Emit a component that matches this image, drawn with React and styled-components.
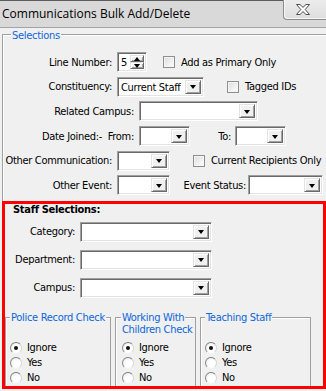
import React from "react";
import styled, { createGlobalStyle } from "styled-components";

const GlobalStyle = createGlobalStyle`
  html, body {
    margin: 0;
    padding: 0;
    background: #f0f0f0;
  }
  body {
    font-family: "DejaVu Sans Condensed", "DejaVu Sans", sans-serif;
    font-size: 11px;
    letter-spacing: -0.3px;
    color: #000;
  }
`;

const Window = styled.div`
  width: 326px;
  height: 391px;
  overflow: hidden;
  background: #f0f0f0;
  display: flex;
  flex-direction: column;
`;

const TitleBar = styled.div`
  height: 28px;
  flex: none;
  box-sizing: border-box;
  background: #d9d9d9;
  border-top: 1px solid #5c5c5c;
  border-bottom: 1px solid #a3a3a3;
  display: flex;
  align-items: flex-start;
`;

const Title = styled.span`
  font-family: "Open Sans", sans-serif;
  font-size: 12px;
  letter-spacing: 0;
  line-height: 16px;
  padding: 5px 0 0 2px;
`;

const CloseButton = styled.span`
  margin-left: auto;
  margin-top: -1px;
  width: 43px;
  height: 20px;
  box-sizing: border-box;
  border-left: 1px solid #8c8c8c;
  border-bottom: 1px solid #8c8c8c;
  border-bottom-left-radius: 4px;
  background: linear-gradient(#ececec, #dedede);
  box-shadow: inset 1px -1px 0 #f6f6f6;
  display: flex;
  align-items: center;
  justify-content: center;
  padding-right: 4px;
`;

const Body = styled.div`
  flex: 1;
  padding-left: 2px;
  display: flex;
  flex-direction: column;
`;

const Frame = styled.div`
  box-sizing: border-box;
  border: 1px solid #a0a0a0;
  border-bottom: none;
  box-shadow: inset 1px 1px 0 #fff;
  margin-top: ${(p) => p.$top || 0}px;
  width: ${(p) => (p.$w ? `${p.$w}px` : "auto")};
  display: flex;
  flex-direction: column;
  flex: none;
`;

const CaptionRow = styled.div`
  margin-top: ${(p) => p.$lift || -6}px;
  padding-left: ${(p) => p.$indent}px;
  width: ${(p) => (p.$wrap ? `${p.$wrap}px` : "auto")};
  height: ${(p) => p.$h || 13}px;
  line-height: 12px;
  flex: none;
`;

const Caption = styled.span`
  color: #0c66d8;
  background: #f0f0f0;
  padding: 0 1px;
  box-decoration-break: clone;
`;

const Rows = styled.div`
  display: flex;
  flex-direction: column;
  gap: ${(p) => p.$gap}px;
  margin-top: ${(p) => p.$top}px;
  padding-bottom: ${(p) => p.$bottom || 0}px;
`;

const Row = styled.div`
  display: flex;
  align-items: center;
  height: 20px;
  white-space: nowrap;
`;

const Label = styled.span`
  width: ${(p) => p.$w}px;
  margin-right: ${(p) => (p.$gap === undefined ? 5 : p.$gap)}px;
  text-align: right;
  flex: none;
  display: flex;
  justify-content: flex-end;
  overflow: visible;
`;

const sunken = `
  border: 1px solid;
  border-color: #a0a0a0 #ffffff #ffffff #a0a0a0;
  box-shadow: inset 1px 1px 0 #696969, inset -1px -1px 0 #e3e3e3;
`;

const raised = `
  border: 1px solid;
  border-color: #e3e3e3 #696969 #696969 #e3e3e3;
  box-shadow: inset 1px 1px 0 #ffffff, inset -1px -1px 0 #a0a0a0;
`;

const SelectBox = styled.div`
  width: ${(p) => p.$w}px;
  height: 20px;
  box-sizing: border-box;
  background: #fff;
  ${sunken}
  padding: 2px;
  display: flex;
  align-items: stretch;
  flex: none;
`;

const SelectValue = styled.span`
  flex: 1;
  line-height: 16px;
  padding-left: 1px;
  overflow: hidden;
`;

const DropButton = styled.span`
  width: 16px;
  box-sizing: border-box;
  background: #f0f0f0;
  ${raised}
  display: flex;
  align-items: center;
  justify-content: center;
  &::after {
    content: "";
    border-left: 3.5px solid transparent;
    border-right: 3.5px solid transparent;
    border-top: 4px solid #000;
    margin-top: 1px;
  }
`;

const Spinner = styled(SelectBox)`
  width: 30px;
`;

const SpinButtons = styled.span`
  width: 14px;
  display: flex;
  flex-direction: column;
`;

const SpinArrow = styled.span`
  flex: 1;
  box-sizing: border-box;
  background: #f0f0f0;
  ${raised}
  display: flex;
  align-items: center;
  justify-content: center;
  &::after {
    content: "";
    border-left: 3.5px solid transparent;
    border-right: 3.5px solid transparent;
    ${(p) =>
      p.$up ? "border-bottom: 4px solid #000;" : "border-top: 4px solid #000;"}
  }
`;

const CheckWrap = styled.span`
  display: flex;
  align-items: center;
  margin-left: ${(p) => p.$left}px;
  gap: 6px;
`;

const CheckBox = styled.span`
  width: 12px;
  height: 12px;
  box-sizing: border-box;
  border: 1px solid #8e8f8f;
  background: linear-gradient(135deg, #dcdcdc, #ffffff);
  box-shadow: inset 0 0 0 1px #f4f4f4;
  flex: none;
`;

const StaffBox = styled.div`
  width: 324px;
  height: 188px;
  box-sizing: border-box;
  border: 3px solid #ff0000;
  display: flex;
  flex-direction: column;
  overflow: hidden;
  flex: none;
`;

const StaffTitle = styled.div`
  font-weight: bold;
  line-height: 12px;
  padding-left: 8px;
`;

const Groups = styled.div`
  display: flex;
  align-items: stretch;
  flex: 1;
  margin-top: 19px;
  gap: ${(p) => p.$gap}px;
`;

const RadioList = styled.div`
  display: flex;
  flex-direction: column;
  gap: 3px;
  margin-top: 6px;
  padding-left: ${(p) => p.$indent}px;
`;

const RadioRow = styled.div`
  display: flex;
  align-items: center;
  height: 12px;
  gap: 5px;
`;

const RadioDot = styled.span`
  width: 12px;
  height: 12px;
  box-sizing: border-box;
  border-radius: 50%;
  border: 1px solid;
  border-color: #7a7a7a #d6d6d6 #f4f4f4 #8a8a8a;
  background: radial-gradient(circle at 60% 60%, #ffffff 40%, #e6e6e6 100%);
  display: flex;
  align-items: center;
  justify-content: center;
  flex: none;
  &::after {
    content: "";
    width: 4px;
    height: 4px;
    border-radius: 50%;
    background: ${(p) => (p.$on ? "#111" : "transparent")};
  }
`;

const Select = ({ w, value }) => (
  <SelectBox $w={w}>
    <SelectValue>{value}</SelectValue>
    <DropButton />
  </SelectBox>
);

const Check = ({ left, children }) => (
  <CheckWrap $left={left}>
    <CheckBox />
    <span>{children}</span>
  </CheckWrap>
);

const RadioGroup = ({ w, title, indent, wrap, radioIndent }) => (
  <Frame $w={w}>
    <CaptionRow $indent={indent} $wrap={wrap} $h={24}>
      <Caption>{title}</Caption>
    </CaptionRow>
    <RadioList $indent={radioIndent}>
      {["Ignore", "Yes", "No"].map((opt, i) => (
        <RadioRow key={opt}>
          <RadioDot $on={i === 0} />
          <span>{opt}</span>
        </RadioRow>
      ))}
    </RadioList>
  </Frame>
);

const CloseIcon = () => (
  <svg width="14" height="11" viewBox="0 0 14 11">
    <polygon
      points="0.5,0.5 4,0.5 7,3.4 10,0.5 13.5,0.5 9.2,5.5 13.5,10.5 10,10.5 7,7.6 4,10.5 0.5,10.5 4.8,5.5"
      fill="#ffffff"
      stroke="#4f4f4f"
      strokeWidth="1"
      strokeLinejoin="round"
    />
  </svg>
);

export default function App() {
  return (
    <>
      <GlobalStyle />
      <Window>
        <TitleBar>
          <Title>Communications Bulk Add/Delete</Title>
          <CloseButton>
            <CloseIcon />
          </CloseButton>
        </TitleBar>
        <Body>
          <Frame $top={6} $w={340}>
            <CaptionRow $indent={8} $lift={-5}>
              <Caption>Selections</Caption>
            </CaptionRow>
            <Rows $gap={4.7} $top={9} $bottom={5.5}>
              <Row>
                <Label $w={109}>Line Number:</Label>
                <Spinner>
                  <SelectValue>5</SelectValue>
                  <SpinButtons>
                    <SpinArrow $up />
                    <SpinArrow />
                  </SpinButtons>
                </Spinner>
                <Check left={16}>Add as Primary Only</Check>
              </Row>
              <Row>
                <Label $w={109}>Constituency:</Label>
                <Select w={87} value="Current Staff" />
                <Check left={23}>Tagged IDs</Check>
              </Row>
              <Row>
                <Label $w={131}>Related Campus:</Label>
                <Select w={119} />
              </Row>
              <Row>
                <Label $w={131}>Date Joined:-&nbsp;&nbsp;From:</Label>
                <Select w={51} />
                <Label $w={41} $gap={4}>To:</Label>
                <Select w={51} />
              </Row>
              <Row>
                <Label $w={109}>Other Communication:</Label>
                <Select w={53} />
                <Check left={23}>Current Recipients Only</Check>
              </Row>
              <Row>
                <Label $w={109}>Other Event:</Label>
                <Select w={53} />
                <Label $w={76} $gap={2}>Event Status:</Label>
                <Select w={75} />
              </Row>
            </Rows>
          </Frame>
          <StaffBox>
            <StaffTitle>Staff Selections:</StaffTitle>
            <Rows $gap={8} $top={6}>
              <Row>
                <Label $w={70}>Category:</Label>
                <Select w={132} />
              </Row>
              <Row>
                <Label $w={70}>Department:</Label>
                <Select w={132} />
              </Row>
              <Row>
                <Label $w={70}>Campus:</Label>
                <Select w={132} />
              </Row>
            </Rows>
            <Groups $gap={4}>
              <RadioGroup w={106} title="Police Record Check" indent={4} radioIndent={4} />
              <RadioGroup w={81} title="Working With Children Check" indent={5} wrap={78} radioIndent={6} />
              <RadioGroup w={111} title="Teaching Staff" indent={4} radioIndent={4} />
            </Groups>
          </StaffBox>
        </Body>
      </Window>
    </>
  );
}
